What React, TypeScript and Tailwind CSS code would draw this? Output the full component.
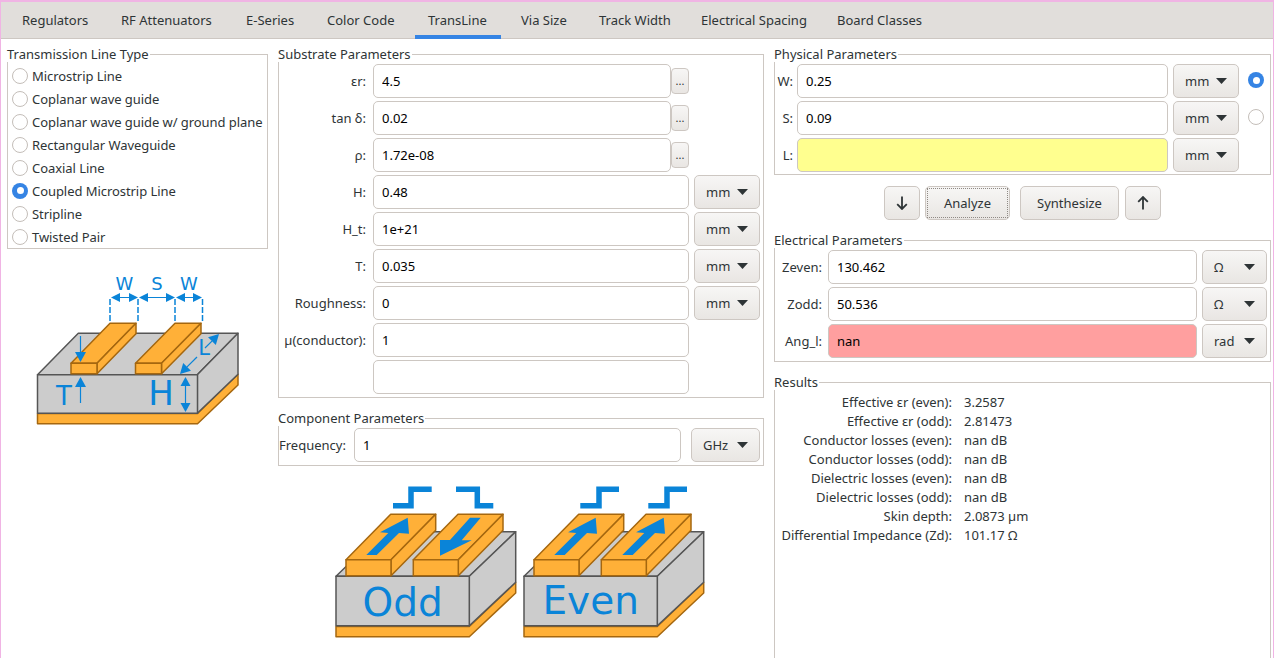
import React from "react";

// text of the tabs sits at fixed places in the reference, so each tab keeps its own width
const tabs = [
    { name: "Regulators", width: "w-[99px]" },
    { name: "RF Attenuators", width: "w-[125px]" },
    { name: "E-Series", width: "w-[81px]" },
    { name: "Color Code", width: "w-[101px]" },
    { name: "TransLine", width: "w-[86px] mr-[7px]" },
    { name: "Via Size", width: "w-[78px]" },
    { name: "Track Width", width: "w-[102px]" },
    { name: "Electrical Spacing", width: "w-[136px]" },
    { name: "Board Classes", width: "w-[110px]" },
];
const lineTypes = ["Microstrip Line", "Coplanar wave guide", "Coplanar wave guide w/ ground plane", "Rectangular Waveguide", "Coaxial Line", "Coupled Microstrip Line", "Stripline", "Twisted Pair"];
const results = [
    ["Effective εr (even):", "3.2587"],
    ["Effective εr (odd):", "2.81473"],
    ["Conductor losses (even):", "nan dB"],
    ["Conductor losses (odd):", "nan dB"],
    ["Dielectric losses (even):", "nan dB"],
    ["Dielectric losses (odd):", "nan dB"],
    ["Skin depth:", "2.0873 µm"],
    ["Differential Impedance (Zd):", "101.17 Ω"],
];

const ORANGE = "#ffb038";
const BROWN = "#a5670f";
const GREY = "#cccccc";
const EDGE = "#555555";
const BLUE = "#0a84d8";

function Group({ title, className, children }: { title: string; className?: string; children: React.ReactNode }) {
    return (
        <div className={`relative border border-[#cdc7c2] ${className ?? ""}`}>
            <span className="absolute left-[-1px] top-[-9px] bg-white pr-px text-[13px] leading-[16px]">{title}</span>
            {children}
        </div>
    );
}

function Radio({ checked }: { checked?: boolean }) {
    return checked ? (
        <span className="flex h-4 w-4 shrink-0 items-center justify-center rounded-full bg-[#3584e4]">
            <span className="h-[7px] w-[7px] rounded-full bg-white"></span>
        </span>
    ) : (
        <span className="block h-4 w-4 shrink-0 rounded-full border border-[#c4beb9] bg-white"></span>
    );
}

function Field({ value, bg }: { value?: string; bg?: string }) {
    return (
        <input
            readOnly
            value={value ?? ""}
            className={`h-[34px] w-full min-w-0 rounded-[5px] border border-[#cdc7c2] px-[8px] text-[13px] text-black outline-none ${bg ?? "bg-white"}`}
        />
    );
}

function Unit({ label, width }: { label: string; width: string }) {
    return (
        <div className={`flex h-[34px] shrink-0 items-center justify-between rounded-[5px] border border-[#cdc7c2] bg-gradient-to-b from-[#f7f6f5] to-[#e9e6e3] pl-[11px] pr-[11px] ${width}`}>
            <span>{label}</span>
            <svg className="mb-px" width="11" height="6" viewBox="0 0 11 6"><path d="M0 0H11L5.5 6Z" fill="#2e3436" /></svg>
        </div>
    );
}

function Btn({ children, className }: { children: React.ReactNode; className?: string }) {
    return (
        <div className={`flex h-[34px] items-center justify-center rounded-[5px] border border-[#cdc7c2] bg-gradient-to-b from-[#f7f6f5] to-[#e9e6e3] ${className ?? ""}`}>
            {children}
        </div>
    );
}

function SubstrateRow({ label, value, unit, dots }: { label?: string; value?: string; unit?: string; dots?: boolean }) {
    return (
        <div className="flex h-[34px] items-center">
            <span className="w-[87px] shrink-0 text-right">{label}</span>
            <div className="ml-[7px] w-[316px] shrink-0">
                {dots ? (
                    <div className="flex items-center">
                        <div className="w-[298px] shrink-0"><Field value={value} /></div>
                        <div className="flex h-[26px] w-[18px] shrink-0 items-center justify-center rounded-[4px] border border-[#cdc7c2] bg-gradient-to-b from-[#f7f6f5] to-[#e9e6e3] text-[11px]">...</div>
                    </div>
                ) : (
                    <Field value={value} />
                )}
            </div>
            {unit && <div className="ml-[5px]"><Unit label={unit} width="w-[66px]" /></div>}
        </div>
    );
}

function PhysicalRow({ label, value, bg, radio }: { label: string; value?: string; bg?: string; radio?: "on" | "off" }) {
    return (
        <div className="flex h-[34px] items-center">
            <span className="w-[18px] shrink-0 text-right">{label}</span>
            <div className="ml-[4px] flex-1"><Field value={value} bg={bg} /></div>
            <div className="ml-[5px]"><Unit label="mm" width="w-[66px]" /></div>
            <div className="mb-[2px] ml-[9px] mr-[6px] w-4 shrink-0">{radio && <Radio checked={radio === "on"} />}</div>
        </div>
    );
}

function ElectricalRow({ label, value, unit, bg }: { label: string; value: string; unit: string; bg?: string }) {
    return (
        <div className="flex h-[34px] items-center">
            <span className="w-[47px] shrink-0 text-right">{label}</span>
            <div className="ml-[6px] flex-1"><Field value={value} bg={bg} /></div>
            <div className="ml-[5px] mr-[3px]"><Unit label={unit} width="w-[65px]" /></div>
        </div>
    );
}

function Arrow({ x1, y1, x2, y2 }: { x1: number; y1: number; x2: number; y2: number }) {
    // line with a filled head at (x2, y2)
    const a = Math.atan2(y2 - y1, x2 - x1);
    const l = 10;
    const w = 5.5;
    const bx = x2 - Math.cos(a) * l;
    const by = y2 - Math.sin(a) * l;
    const nx = -Math.sin(a) * w;
    const ny = Math.cos(a) * w;
    return (
        <g>
            <line x1={x1} y1={y1} x2={bx} y2={by} stroke={BLUE} strokeWidth="1.2" />
            <polygon points={`${x2},${y2} ${bx + nx},${by + ny} ${bx - nx},${by - ny}`} fill={BLUE} />
        </g>
    );
}

function DimArrow({ x1, x2, y }: { x1: number; x2: number; y: number }) {
    return (
        <g fill={BLUE}>
            <line x1={x1 + 5} y1={y} x2={x2 - 5} y2={y} stroke={BLUE} strokeWidth="1" />
            <polygon points={`${x1},${y} ${x1 + 9},${y - 4.5} ${x1 + 9},${y + 4.5}`} />
            <polygon points={`${x2},${y} ${x2 - 9},${y - 4.5} ${x2 - 9},${y + 4.5}`} />
        </g>
    );
}

function DimV({ x, y1, y2 }: { x: number; y1: number; y2: number }) {
    return (
        <g fill={BLUE}>
            <line x1={x} y1={y1 + 5} x2={x} y2={y2 - 5} stroke={BLUE} strokeWidth="1.2" />
            <polygon points={`${x},${y1} ${x - 5},${y1 + 9} ${x + 5},${y1 + 9}`} />
            <polygon points={`${x},${y2} ${x - 5},${y2 - 9} ${x + 5},${y2 - 9}`} />
        </g>
    );
}

function Trace({ x, w, dx, topY, backY, frontH }: { x: number; w: number; dx: number; topY: number; backY: number; frontH: number }) {
    return (
        <g fill={ORANGE} stroke={BROWN} strokeWidth="1.5" strokeLinejoin="round">
            <polygon points={`${x},${topY} ${x + dx},${backY} ${x + dx + w},${backY} ${x + w},${topY}`} />
            <polygon points={`${x + w},${topY} ${x + w + dx},${backY} ${x + w + dx},${backY + frontH} ${x + w},${topY + frontH}`} />
            <rect x={x} y={topY} width={w} height={frontH} />
        </g>
    );
}

function SideDiagram() {
    return (
        <svg className="block" width="261" height="190" viewBox="7 248 261 190">
            <g strokeLinejoin="round">
                <polygon points="37.5,412.5 197.5,412.5 238,373.3 238,384 197.5,422.7 37.5,422.7" fill={ORANGE} stroke={BROWN} strokeWidth="1.5" />
                <polygon points="37.5,373.7 78.3,332.3 238,332.3 197.3,373.7" fill={GREY} stroke={EDGE} strokeWidth="1.5" />
                <polygon points="197.3,373.7 238,332.3 238,373.3 197.3,412.3" fill={GREY} stroke={EDGE} strokeWidth="1.5" />
                <rect x="37.5" y="373.7" width="160" height="38.6" fill={GREY} stroke={EDGE} strokeWidth="1.5" />
            </g>
            <Trace x={71} w={26} dx={39} topY={362.3} backY={322.3} frontH={10.4} />
            <Trace x={135.5} w={26} dx={39.5} topY={362.3} backY={322.3} frontH={10.4} />
            <g stroke={BLUE} strokeWidth="1.5" strokeDasharray="6 2">
                <line x1="110" y1="298" x2="110" y2="322" />
                <line x1="138" y1="298" x2="138" y2="322" />
                <line x1="175" y1="298" x2="175" y2="322" />
                <line x1="202.5" y1="298" x2="202.5" y2="322" />
            </g>
            <DimArrow x1={111} x2={138} y={296.5} />
            <DimArrow x1={139} x2={175} y={296.5} />
            <DimArrow x1={176} x2={202} y={296.5} />
            <g fill={BLUE} fontFamily="'DejaVu Sans', sans-serif" textAnchor="middle">
                <text x="124.5" y="289" fontSize="18">W</text>
                <text x="157" y="289" fontSize="18">S</text>
                <text x="189" y="289" fontSize="18">W</text>
                <text x="64" y="404" fontSize="26">T</text>
                <text x="161" y="404" fontSize="34">H</text>
                <text x="204" y="354" fontSize="21">L</text>
            </g>
            <Arrow x1={80.5} y1={335} x2={80.5} y2={361} />
            <Arrow x1={80.5} y1={402} x2={80.5} y2={376} />
            <DimV x={185.5} y1={376} y2={411} />
            <Arrow x1={197} y1={356} x2={180} y2={373} />
            <Arrow x1={205} y1={347} x2={219} y2={333} />
        </svg>
    );
}

// solid arrows painted on the strips
const UP_ARROW = "407.7,517.7 409,533.7 399,533 376.7,555 366.3,555 388.3,533 380,532.3";
const DOWN_ARROW = "470,517.7 480.7,517.7 461.7,540.3 471.7,540.3 440,555.7 440,540 450,540";

function Block({ dx, label, labelY }: { dx: number; label: string; labelY: number }) {
    return (
        <g transform={`translate(${dx} 0)`}>
            <g strokeLinejoin="round">
                <polygon points="336,626.5 469.3,626.5 515.7,582.3 515.7,593 469.3,636.7 336,636.7" fill={ORANGE} stroke={BROWN} strokeWidth="1.5" />
                <polygon points="336,576.3 382,531.7 515.7,531.7 469.3,576.3" fill={GREY} stroke={EDGE} strokeWidth="1.5" />
                <polygon points="469.3,576.3 515.7,531.7 515.7,582.3 469.3,625.7" fill={GREY} stroke={EDGE} strokeWidth="1.5" />
                <rect x="336" y="576.3" width="133.3" height="49.4" fill={GREY} stroke={EDGE} strokeWidth="1.5" />
            </g>
            <Trace x={346} w={45} dx={44.7} topY={559.7} backY={514.3} frontH={16} />
            <Trace x={413.3} w={45} dx={44.7} topY={559.7} backY={514.3} frontH={16} />
            <text x="402.7" y={labelY} fontSize="39" textAnchor="middle" fill={BLUE} fontFamily="'DejaVu Sans', sans-serif">{label}</text>
        </g>
    );
}

function ModesDiagram() {
    return (
        <svg className="block" width="486" height="188" viewBox="278 470 486 188">
            <Block dx={0} label="Odd" labelY={616} />
            <Block dx={188} label="Even" labelY={614} />
            <g fill={BLUE}>
                <polygon points={UP_ARROW} />
                <polygon points={DOWN_ARROW} />
                <polygon points={UP_ARROW} transform="translate(188 0)" />
                <polygon points={UP_ARROW} transform="translate(256 0)" />
            </g>
            <g fill="none" stroke={BLUE} strokeWidth="5.5">
                <polyline points="393,505.7 411,505.7 411,489.3 431.7,489.3" />
                <polyline points="456,489.3 477.3,489.3 477.3,505.7 493.3,505.7" />
                <polyline points="580.3,505.7 599,505.7 599,489.3 619,489.3" />
                <polyline points="648.3,505.7 667,505.7 667,489.3 687,489.3" />
            </g>
        </svg>
    );
}

export default function App() {
    return (
        <div className="flex h-[658px] w-[1274px] flex-col overflow-hidden border-x border-t-2 border-[#f0b4e4] bg-white font-['Noto_Sans',sans-serif] text-[13px] leading-[18px] text-[#2e3436]">
            {/* tab bar */}
            <div className="flex h-[37px] shrink-0 items-start border-b border-[#cdc7c2] bg-[#e1dedb] pl-[8px]">
                {tabs.map((t) => (
                    <div
                        key={t.name}
                        className={t.name === "TransLine"
                            ? `flex h-[37px] shrink-0 items-center border-b-[4px] border-[#3584e4] pl-[13px] pt-[3px] ${t.width}`
                            : `flex h-[36px] shrink-0 items-center pl-[13px] ${t.width}`}
                    >
                        {t.name}
                    </div>
                ))}
            </div>

            <div className="flex flex-1 gap-[10px] pl-[6px] pt-[15px]">
                {/* left column */}
                <div className="w-[261px] shrink-0">
                    <Group title="Transmission Line Type" className="h-[195px] pt-[9px]">
                        {lineTypes.map((t) => (
                            <div key={t} className="flex h-[23px] items-center gap-[4px] pl-[4px]">
                                <Radio checked={t === "Coupled Microstrip Line"} />
                                <span className="whitespace-nowrap tracking-[-0.06px]">{t}</span>
                            </div>
                        ))}
                    </Group>
                    <SideDiagram />
                </div>

                {/* middle column */}
                <div className="w-[486px] shrink-0">
                    <Group title="Substrate Parameters" className="flex flex-col gap-[3px] pb-[3px] pt-[9px]">
                        <SubstrateRow label="εr:" value="4.5" dots />
                        <SubstrateRow label="tan δ:" value="0.02" dots />
                        <SubstrateRow label="ρ:" value="1.72e-08" dots />
                        <SubstrateRow label="H:" value="0.48" unit="mm" />
                        <SubstrateRow label="H_t:" value="1e+21" unit="mm" />
                        <SubstrateRow label="T:" value="0.035" unit="mm" />
                        <SubstrateRow label="Roughness:" value="0" unit="mm" />
                        <SubstrateRow label="µ(conductor):" value="1" />
                        <SubstrateRow />
                    </Group>
                    <Group title="Component Parameters" className="mt-[20px] flex h-[48px] items-center pr-[3px] pt-[6px]">
                        <span className="w-[69px] shrink-0">Frequency:</span>
                        <div className="ml-[6px] w-[327px] shrink-0"><Field value="1" /></div>
                        <div className="ml-[10px]"><Unit label="GHz" width="w-[69px]" /></div>
                    </Group>
                    <div className="mt-[4px]"><ModesDiagram /></div>
                </div>

                {/* right column */}
                <div className="w-[497px] shrink-0">
                    <Group title="Physical Parameters" className="flex flex-col gap-[3px] pb-[2px] pt-[9px]">
                        <PhysicalRow label="W:" value="0.25" radio="on" />
                        <PhysicalRow label="S:" value="0.09" radio="off" />
                        <PhysicalRow label="L:" bg="bg-[#ffff8f]" />
                    </Group>
                    <div className="mt-[11px] flex justify-center">
                        <Btn className="w-[36px]">
                            <svg width="12" height="14" viewBox="0 0 12 14" fill="none" stroke="#2e3436" strokeWidth="1.8"><path d="M6 0.5V13M1.2 8.2L6 13L10.8 8.2" /></svg>
                        </Btn>
                        <Btn className="ml-[5px] w-[85px]">
                            <span className="flex h-[30px] w-[81px] items-center justify-center border border-dotted border-[#8f8a85]">Analyze</span>
                        </Btn>
                        <Btn className="ml-[10px] w-[99px]">Synthesize</Btn>
                        <Btn className="ml-[6px] w-[36px]">
                            <svg width="12" height="14" viewBox="0 0 12 14" fill="none" stroke="#2e3436" strokeWidth="1.8"><path d="M6 13.5V1M1.2 5.8L6 1L10.8 5.8" /></svg>
                        </Btn>
                    </div>
                    <Group title="Electrical Parameters" className="mt-[20px] flex flex-col gap-[3px] pb-[3px] pt-[9px]">
                        <ElectricalRow label="Zeven:" value="130.462" unit="Ω" />
                        <ElectricalRow label="Zodd:" value="50.536" unit="Ω" />
                        <ElectricalRow label="Ang_l:" value="nan" unit="rad" bg="bg-[#ff9f9f]" />
                    </Group>
                    <Group title="Results" className="mt-[20px] h-[300px] pt-[9px]">
                        {results.map(([k, v]) => (
                            <div key={k} className="flex h-[19px] items-center">
                                <span className="w-[177px] shrink-0 whitespace-nowrap text-right">{k}</span>
                                <span className="ml-[12px]">{v}</span>
                            </div>
                        ))}
                    </Group>
                </div>
            </div>
        </div>
    );
}
